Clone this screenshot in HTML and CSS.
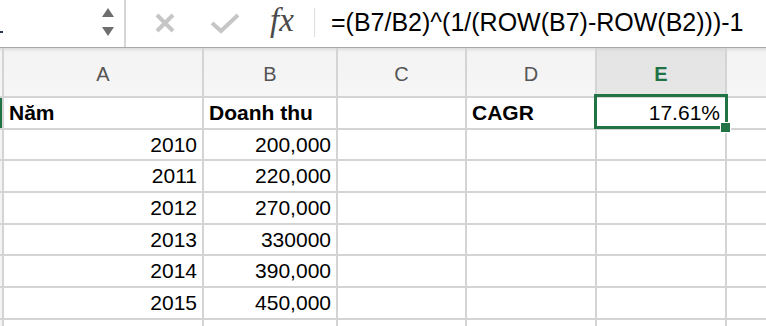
FILE: index.html
```html
<!DOCTYPE html>
<html lang="vi">
  <head>
    <meta charset="UTF-8" />
    <title>CAGR</title>
    <link rel="stylesheet" href="styles.css">
  </head>
  <body>
    <div class="app">
      <!-- thanh công thức -->
      <div class="formula-bar">
        <div class="name-box">
          <span class="name-mark"></span>
          <div class="spinner">
            <span class="tri tri-up"></span>
            <span class="tri tri-down"></span>
          </div>
        </div>
        <div class="bar-icons">
          <svg class="icon-cancel" width="22" height="22" viewBox="0 0 22 22">
            <path d="M3 3 L19 19 M19 3 L3 19" stroke="#c6c6c6" stroke-width="4" fill="none" />
          </svg>
          <svg class="icon-enter" width="30" height="22" viewBox="0 0 30 22">
            <path d="M2 11 L11 19 L28 3" stroke="#c6c6c6" stroke-width="4" fill="none" />
          </svg>
          <span class="fx">fx</span>
        </div>
        <div class="formula">=(B7/B2)^(1/(ROW(B7)-ROW(B2)))-1</div>
      </div>

      <!-- bảng tính -->
      <div class="sheet">
        <div class="grid">
          <div class="corner"></div>
          <div class="col-head">A</div>
          <div class="col-head">B</div>
          <div class="col-head">C</div>
          <div class="col-head">D</div>
          <div class="col-head col-head-active">E</div>
          <div class="col-head"></div>

          <div class="row-head row-head-active"></div>
          <div class="cell bold">Năm</div>
          <div class="cell bold">Doanh thu</div>
          <div class="cell"></div>
          <div class="cell bold">CAGR</div>
          <div class="cell num">17.61%</div>
          <div class="cell"></div>

          <div class="row-head"></div>
          <div class="cell num">2010</div>
          <div class="cell num">200,000</div>
          <div class="cell"></div>
          <div class="cell"></div>
          <div class="cell"></div>
          <div class="cell"></div>

          <div class="row-head"></div>
          <div class="cell num">2011</div>
          <div class="cell num">220,000</div>
          <div class="cell"></div>
          <div class="cell"></div>
          <div class="cell"></div>
          <div class="cell"></div>

          <div class="row-head"></div>
          <div class="cell num">2012</div>
          <div class="cell num">270,000</div>
          <div class="cell"></div>
          <div class="cell"></div>
          <div class="cell"></div>
          <div class="cell"></div>

          <div class="row-head"></div>
          <div class="cell num">2013</div>
          <div class="cell num">330000</div>
          <div class="cell"></div>
          <div class="cell"></div>
          <div class="cell"></div>
          <div class="cell"></div>

          <div class="row-head"></div>
          <div class="cell num">2014</div>
          <div class="cell num">390,000</div>
          <div class="cell"></div>
          <div class="cell"></div>
          <div class="cell"></div>
          <div class="cell"></div>

          <div class="row-head"></div>
          <div class="cell num">2015</div>
          <div class="cell num">450,000</div>
          <div class="cell"></div>
          <div class="cell"></div>
          <div class="cell"></div>
          <div class="cell"></div>

          <div class="row-head"></div>
          <div class="cell"></div>
          <div class="cell"></div>
          <div class="cell"></div>
          <div class="cell"></div>
          <div class="cell"></div>
          <div class="cell"></div>
        </div>

        <!-- ô đang chọn (E1) -->
        <div class="selection">
          <span class="fill-handle"></span>
        </div>
      </div>
    </div>
  </body>
</html>
```

FILE: styles.css
```css
html,
body {
  margin: 0;
  padding: 0;
  background-color: #fff;
}

.app {
  width: 766px;
  height: 326px;
  overflow: hidden;
  font-family: "Liberation Sans", Arial, sans-serif;
}

/* thanh công thức */
.formula-bar {
  display: flex;
  align-items: stretch;
  height: 47px;
  border-bottom: 1px solid #a9a9a9;
  background-color: #fff;
}

.name-box {
  position: relative;
  display: flex;
  justify-content: flex-end;
  width: 126px;
  border-right: 2px solid #d6d6d6;
  box-sizing: border-box;
}

.name-mark {
  position: absolute;
  left: 0;
  top: 31px;
  width: 3px;
  height: 2px;
  background-color: #2a3a4a;
}

.spinner {
  display: flex;
  flex-direction: column;
  justify-content: space-between;
  align-items: center;
  padding: 8px 0 11px;
  width: 14px;
  margin-right: 9px;
}

.tri {
  width: 0;
  height: 0;
  border-left: 6px solid transparent;
  border-right: 6px solid transparent;
}

.tri-up {
  border-bottom: 9px solid #6e6e6e;
}

.tri-down {
  border-top: 9px solid #6e6e6e;
}

.bar-icons {
  display: flex;
  align-items: center;
  width: 189px;
  border-right: 1px solid #dedede;
  margin: 8px 0 10px;
  box-sizing: border-box;
}

.icon-cancel {
  margin-left: 28px;
}

.icon-enter {
  margin-left: 34px;
}

.fx {
  margin-left: 30px;
  font-family: "Liberation Serif", "Times New Roman", serif;
  font-style: italic;
  font-size: 33px;
  color: #4a4a4a;
  padding-bottom: 4px;
}

.formula {
  display: flex;
  align-items: center;
  padding-left: 16px;
  font-size: 25px;
  color: #000;
  white-space: nowrap;
  padding-bottom: 3px;
}

/* bảng tính */
.sheet {
  position: relative;
}

.grid {
  display: grid;
  grid-template-columns: 2px 198px 132px 127px 128px 128px 1fr;
  grid-template-rows: 48px repeat(8, 29.7px);
  gap: 2px;
  background-color: #d4d4d4;
}

.corner,
.col-head {
  background: linear-gradient(#dcdcdc, #f3f3f3 4px, #f6f6f6);
}

.col-head {
  display: flex;
  align-items: center;
  justify-content: center;
  padding-top: 4px;
  font-size: 20px;
  color: #555;
}

.col-head-active {
  background: linear-gradient(#d6d6d6, #e4e4e4 4px, #e6e6e6);
  color: #217346;
  font-weight: 700;
}

.row-head {
  background-color: #f4f4f4;
}

.row-head-active {
  background-color: #217346;
}

.cell {
  display: flex;
  align-items: center;
  padding: 0 5px 0 5px;
  background-color: #fff;
  font-size: 21px;
  color: #000;
  white-space: nowrap;
  overflow: hidden;
}

.bold {
  font-weight: 700;
}

.num {
  justify-content: flex-end;
}

.selection {
  position: absolute;
  left: 594px;
  top: 46px;
  width: 134px;
  height: 35px;
  border: 3px solid #217346;
  box-sizing: border-box;
}

.fill-handle {
  position: absolute;
  right: -6px;
  bottom: -7px;
  width: 9px;
  height: 9px;
  background-color: #217346;
  border: 1px solid #fff;
}
```
